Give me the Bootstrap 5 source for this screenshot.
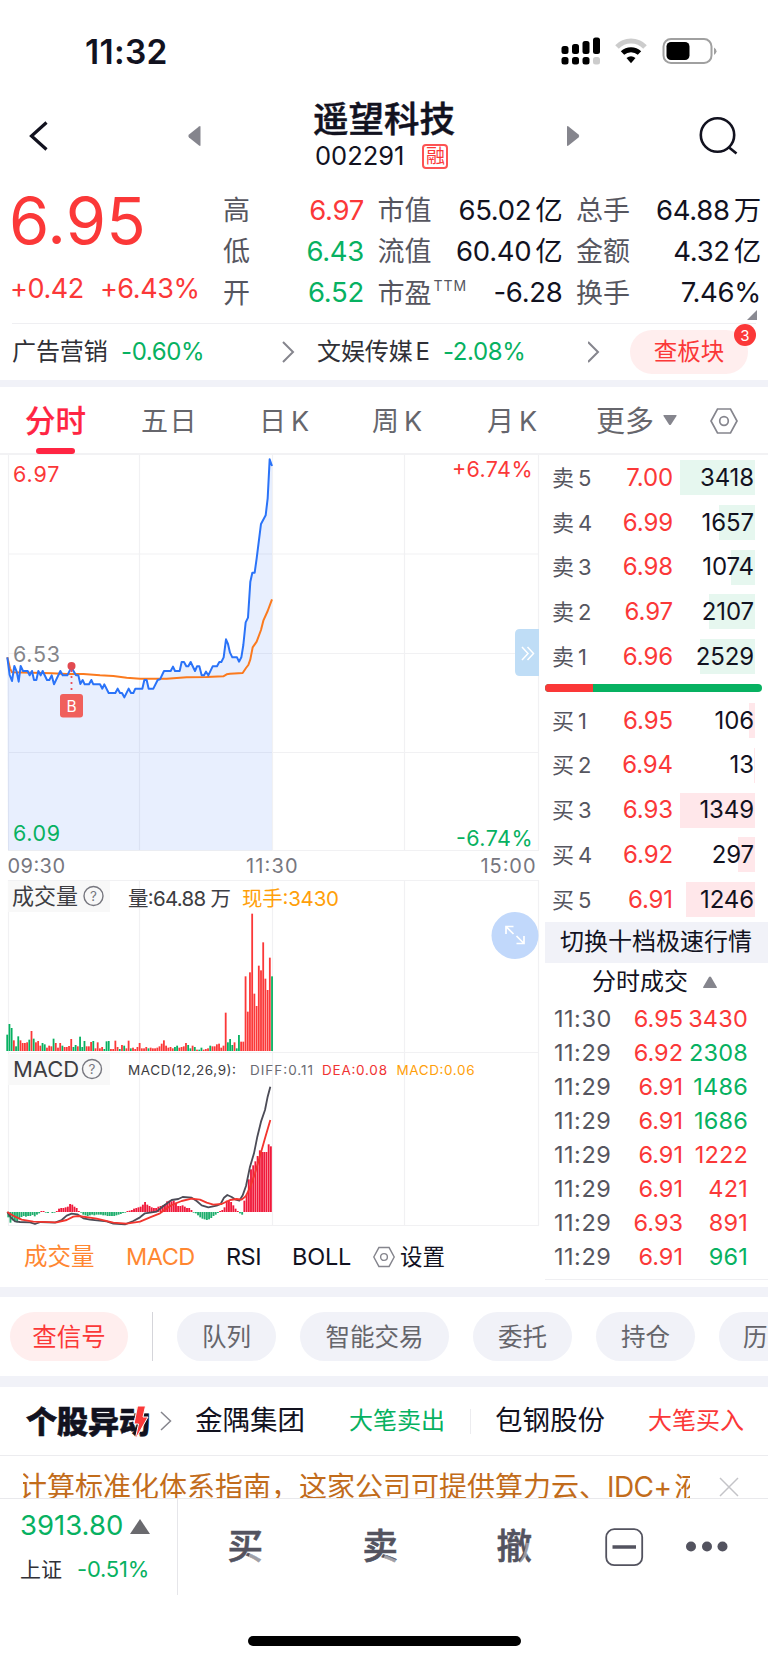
<!DOCTYPE html>
<html lang="zh-CN">
<head>
<meta charset="utf-8">
<meta name="viewport" content="width=device-width, initial-scale=1">
<title>遥望科技 002291</title>
<link rel="stylesheet" href="https://cdn.jsdelivr.net/npm/bootstrap@5.3.0/dist/css/bootstrap.min.css">
<style>
  :root { --up:#fb3838; --down:#07b161; --ink:#12121f; --mute:#56565f; --band:#f1f2f8; --rule:#f2f2f4; }
  body { width:768px; height:1663px; overflow:hidden; background:#fff; color:var(--ink); line-height:1;
         font-family:Inter,"Noto Sans CJK SC",sans-serif; font-size:24px; white-space:nowrap; }
  svg { display:block; flex:none; }
  .up { color:var(--up); } .down { color:var(--down); } .mute { color:var(--mute); } .ink2 { color:#303036; }
  .band { background:var(--band); }
  .status { height:96px; padding-left:85px; }
  .clock { font-size:33.5px; font-weight:600; width:475px; letter-spacing:.3px; padding-top:10px; }
  .titlebar { height:94px; }
  .stock-name { font-size:35.5px; font-weight:500; height:42px; -webkit-text-stroke:.5px var(--ink); }
  .code-row { height:30px; padding-left:2px; }
  .code { font-size:25.5px; letter-spacing:0; }
  .rong { width:26px; height:25px; border:2px solid #fd5353; border-radius:4px; font-size:19px; color:var(--up); margin-left:18px; }
  .quote { height:133px; }
  .last { font-size:65px; height:86px; margin-left:9px; letter-spacing:.2px; }
  .chg { font-size:27px; margin-left:10px; gap:16px; letter-spacing:-.4px; height:30px; }
  .stats { font-size:27px; }
  .stats .line { height:41.3px; }
  .stats .num { font-size:27.5px; letter-spacing:-.3px; }
  .ttm { font-size:14px; letter-spacing:1px; position:relative; top:-12px; margin-left:2px; }
  .sector { height:57px; border-top:1px solid #efeff2; margin-left:12px; margin-right:12px; }
  .sector .name { letter-spacing:-.1px; }
  .pill-red { background:#ffeeee; color:var(--up); border-radius:30px; }
  .dot3 { position:absolute; width:22px; height:22px; border-radius:50%; background:var(--up); color:#fff; font-size:15px; right:-8px; top:-6px; }
  .tabs { height:68px; font-size:27px; color:#66666c; border-bottom:2px solid var(--rule); padding-top:2px; }
  .tabs .on { font-size:30.5px; font-weight:500; color:#ff2543; position:relative; -webkit-text-stroke:.2px #ff2543; }
  .tabs .on i { position:absolute; left:11px; top:42px; width:39px; height:6px; border-radius:3px; background:#ff2543; }
  .board { height:832px; }
  .side { width:223px; }
  .lv { height:44.7px; padding-left:7px; padding-right:13px; }
  .lv .lab { width:56px; font-size:22px; color:var(--mute); letter-spacing:0; }
  .lv .lab span { font-size:22px; margin-right:4px; }
  .lv .pr { width:65px; text-align:right; letter-spacing:-.1px; }
  .lv .qt { width:75px; height:35px; margin-left:7px; position:relative; letter-spacing:-.1px; padding-right:1px; }
  .lv .qt i { position:absolute; right:0; top:0; bottom:0; }
  .lv .qt b { font-weight:400; position:relative; }
  .ratio { height:8.5px; width:217px; border-radius:5px; background:var(--down); overflow:hidden; margin:5px 0 6px; }
  .deal { height:34.1px; font-size:23.5px; padding-left:9px; }
  .deal .tm { width:61px; color:var(--mute); letter-spacing:.5px; }
  .deal .pr { width:68px; text-align:right; }
  .deal .qt { width:65px; text-align:right; letter-spacing:.2px; }
  .ind { height:60px; font-size:23.5px; padding-left:24px; }
  .quick { height:79px; padding-left:10px; overflow:hidden; }
  .quick .pill { height:49px; border-radius:25px; background:var(--band); color:#66666c; font-size:24.5px; flex:none; padding-top:1px; }
  .quick .pill.hot { background:#ffeeee; color:var(--up); }
  .news { height:69px; padding-left:26px; border-bottom:1px solid #ececef; }
  .logo { font-weight:900; font-size:31px; position:relative; width:125px; -webkit-text-stroke:.6px var(--ink); }
  .logo svg { position:absolute; left:107px; top:-1px; }
  .ticker { height:43px; color:#c26c1b; font-size:28px; border-bottom:1px solid #e9e9ec; overflow:hidden; }
  .ticker .run { margin-left:23px; width:667px; overflow:hidden; height:42px; line-height:62px; }
  .foot { height:96px; }
  .idx { width:178px; border-right:1px solid #e6e6ea; padding-left:20px; }
  .act { font-size:35.5px; font-weight:500; color:#53535f; -webkit-text-stroke:.6px #53535f; }
  .act span { position:relative; display:block; }
  .act svg { position:absolute; left:0; top:0; }
  .homebar { width:273px; height:10px; border-radius:5px; background:#000; margin:41px 0 0 248px; }
</style>
</head>
<body>
<header class="status d-flex align-items-center">
  <div class="clock">11:32</div>
  <svg class="mt-1" width="160" height="34" viewBox="560 33 160 34">
    <g fill="#000"><rect x="561.5" y="46" width="7" height="8" rx="2.5"/><rect x="572" y="44" width="7" height="10" rx="2.5"/><rect x="582.5" y="41" width="7" height="13" rx="2.5"/><rect x="593" y="37.500" width="7" height="16.500" rx="2.5"/>
    <rect x="561.5" y="57" width="7" height="7.500" rx="2.500"/><rect x="572" y="57" width="7" height="7.500" rx="2.5"/><rect x="582.5" y="57" width="7" height="7.5" rx="2.5"/><rect x="593" y="57" width="7" height="7.500" rx="2.5" fill="#ccc"/></g>
    <g fill="none"><path d="M617 47a19.500 19.500 0 0 1 28 0" stroke="#ccc" stroke-width="5"/><path d="M622.500 53a12.500 12.500 0 0 1 17 0" stroke="#000" stroke-width="5"/></g>
    <path d="M626.500 58q4.500-3.500 9 0l-4.500 5.200z" fill="#000"/>
    <rect x="663.500" y="39" width="48" height="24" rx="7.500" fill="none" stroke="#a0a0a0" stroke-width="2"/><rect x="666.500" y="42" width="23" height="18" rx="4.500"/><path d="M714 47.500q2.500 1.500 2.500 3.800t-2.500 3.800z" fill="#a0a0a0"/>
  </svg>
</header>

<div class="titlebar d-flex">
  <svg width="313" height="94" viewBox="0 96 313 94"><path d="M46.500 122.500L31.500 136L46.500 149.500" fill="none" stroke="#12121f" stroke-width="3.200"/><path d="M200.500 127v18q0 1.500-1.500 .5l-10-8q-1.500-1.500 0-3l10-8q1.500-1 1.500 .5z" fill="#85858d"/></svg>
  <div style="width:142px">
    <div class="stock-name d-flex align-items-center justify-content-center" style="margin-top:3px">遥望科技</div>
    <div class="code-row d-flex align-items-center">
      <span class="code">002291</span><span class="rong d-flex align-items-center justify-content-center">融</span></div>
  </div>
  <svg width="313" height="94" viewBox="455 96 313 94"><path d="M567 127v18q0 1.500 1.500 .5l10-8q1.500-1.500 0-3l-10-8q-1.500-1-1.500 .5z" fill="#85858d"/><g fill="none" stroke="#12121f" stroke-width="2.600"><circle cx="717.500" cy="135" r="16.700"/><path d="M728.500 147l8 6.500"/></g></svg>
</div>

<section class="quote d-flex">
  <div style="width:223px">
    <div class="last up d-flex align-items-center" style="margin-top:-12.5px">6.95</div>
    <div class="chg up d-flex align-items-center" style="margin-top:9.5px"><span>+0.42</span><span>+6.43%</span></div>
  </div>
  <div class="stats d-flex">
    <div style="width:141px">
      <div class="line d-flex align-items-center justify-content-between"><span class="mute">高</span><span class="num up">6.97</span></div>
      <div class="line d-flex align-items-center justify-content-between"><span class="mute">低</span><span class="num down">6.43</span></div>
      <div class="line d-flex align-items-center justify-content-between"><span class="mute">开</span><span class="num down">6.52</span></div>
    </div>
    <div style="width:185px;margin-left:13.5px">
      <div class="line d-flex align-items-center justify-content-between"><span class="mute">市值</span><span class="num">65.02<span style="margin-left:4px">亿</span></span></div>
      <div class="line d-flex align-items-center justify-content-between"><span class="mute">流值</span><span class="num">60.40<span style="margin-left:4px">亿</span></span></div>
      <div class="line d-flex align-items-center justify-content-between"><span class="mute">市盈<span class="ttm">TTM</span></span><span class="num">-6.28</span></div>
    </div>
    <div style="width:185px;margin-left:13.5px">
      <div class="line d-flex align-items-center justify-content-between"><span class="mute">总手</span><span class="num">64.88<span style="margin-left:4px">万</span></span></div>
      <div class="line d-flex align-items-center justify-content-between"><span class="mute">金额</span><span class="num">4.32<span style="margin-left:4px">亿</span></span></div>
      <div class="line d-flex align-items-center justify-content-between"><span class="mute">换手</span><span class="num">7.46%</span></div>
      <svg class="ms-auto" style="margin:-4px 4px 0 0" width="10" height="10"><path d="M10 0v10H0z" fill="#8a8a92"/></svg>
    </div>
  </div>
</section>

<section class="sector d-flex align-items-center">
  <div class="name ink2" style="width:109px">广告营销</div><div class="down" style="width:161px;letter-spacing:-.4px">-0.60%</div>
  <svg width="35" height="24" viewBox="0 0 35 24"><path d="M1 2l10 10L1 22" fill="none" stroke="#85858d" stroke-width="2"/></svg>
  <div class="name ink2" style="width:126px">文娱传媒<span style="margin-left:3px">E</span></div><div class="down" style="width:145px;letter-spacing:-.4px">-2.08%</div>
  <svg width="42" height="24" viewBox="0 0 42 24"><path d="M0 2l10 10L0 22" fill="none" stroke="#85858d" stroke-width="2"/></svg>
  <div class="pill-red position-relative d-flex align-items-center justify-content-center" style="width:118px;height:44px;flex:none;font-size:23.5px">查板块<span class="dot3 d-flex align-items-center justify-content-center">3</span></div>
</section>
<div class="band" style="height:7px"></div>

<nav class="tabs d-flex align-items-center">
  <div class="on" style="margin-left:25px;width:116px">分时<i></i></div>
  <div style="width:118px;letter-spacing:1.5px">五日</div>
  <div style="width:113px">日<span style="margin-left:5px">K</span></div>
  <div style="width:115px">周<span style="margin-left:5px">K</span></div>
  <div style="width:109px">月<span style="margin-left:5px">K</span></div>
  <div style="width:67px;font-size:29px">更多</div>
  <svg width="47" height="14" viewBox="0 0 47 14"><path d="M1 1h12q1 0 .5 1L8 10.500q-1 1-2 0L.5 2Q0 1 1 1z" fill="#85858d"/></svg>
  <svg width="28" height="28" viewBox="0 0 28 28"><g fill="none" stroke="#85858d" stroke-width="1.700"><path d="M7.500 2h13l6.500 12-6.500 12h-13L1 14z"/><circle cx="14" cy="14" r="4.300"/></g></svg>
</nav>

<main class="board d-flex">
  <div style="width:545px">
    <svg id="chart" width="545" height="772" viewBox="0 455 545 772" font-family="Inter,'Noto Sans CJK SC',sans-serif">
      <g stroke="#f1f1f3" stroke-width="1.200">
        <path d="M8.500 455V850M139.500 455V850M272.500 455V850M404.500 455V850M538.500 455V850M8 554H539M8 653.500H539M8 752.500H539M8 850.500H539"/>
        <path d="M8 880.500H539M8.500 880V1225M139.500 880V1225M272.500 880V1225M404.500 880V1225M538.500 880V1225M8 1052.500H539M8 1225.500H539"/>
      </g>
      <text x="13" y="661.500" font-size="21.500" fill="#858589" textLength="47">6.53</text>
      <g id="price" transform="translate(0 390) scale(.33333)" fill="none" stroke-linejoin="round"></g>
      <g font-size="21.500">
        <text x="13" y="482" fill="#fb3838" textLength="46.500">6.97</text>
        <text x="13" y="840.500" fill="#07b161" textLength="47">6.09</text>
        <text x="452" y="476.500" fill="#fb3838" textLength="80.500">+6.74%</text>
        <text x="456" y="846" fill="#07b161" textLength="76.500">-6.74%</text>
      </g>
      <path d="M71.500 670V692" stroke="#e8505b" stroke-width="1.800" stroke-dasharray="2 4"/>
      <circle cx="71.500" cy="666" r="4" fill="#e24a50"/>
      <rect x="60" y="694" width="23" height="23.500" rx="3" fill="#f0605c"/>
      <text x="71.500" y="711.500" font-size="15.500" fill="#fff" text-anchor="middle">B</text>
      <path d="M539 629h-19q-5 0-5 5v37q0 5 5 5h19z" fill="#bfddf6"/>
      <path d="M522 647l6 6.500-6 6.500M527.500 647l6 6.500-6 6.500" fill="none" stroke="#fff" stroke-width="1.500"/>
      <g font-size="20" fill="#77777f">
        <text x="7.500" y="873" textLength="57.500">09:30</text><text x="246" y="873" textLength="51.500">11:30</text><text x="480.500" y="873" textLength="55">15:00</text>
      </g>
      <path d="M8 881h102v31H8zM8 1054h102v31H8z" fill="#f8f8f8"/>
      <g fill="#3d3d42">
        <text x="12" y="903.500" font-size="22">成交量</text>
        <text x="13" y="1077" font-size="22">MACD</text>
        <text x="128" y="905.500" font-size="20.500" textLength="103">量:64.88 万</text>
        <text x="128" y="1074.500" font-size="13.500" textLength="108">MACD(12,26,9):</text>
      </g>
      <g fill="none" stroke="#77777f" stroke-width="1.400"><circle cx="93.500" cy="896" r="9.500"/><circle cx="92" cy="1069" r="9.500"/></g>
      <g fill="#77777f" font-size="13.500" text-anchor="middle"><text x="93.500" y="901">?</text><text x="92" y="1074">?</text></g>
      <text x="242" y="905.500" font-size="20.500" fill="#ff9f0a" textLength="97">现手:3430</text>
      <g font-size="13.500">
        <text x="250" y="1074.500" fill="#6b6b73" textLength="63">DIFF:0.11</text>
        <text x="322" y="1074.500" fill="#f03333" textLength="65">DEA:0.08</text>
        <text x="396.500" y="1074.500" fill="#ff9f0a" textLength="78">MACD:0.06</text>
      </g>
      <circle cx="515" cy="935.500" r="23.500" fill="#c1d8fb"/>
      <path d="M506 934v-7.500h7.500M506.500 927l7 7M524 936v7.500h-7.500M523.500 943l-7-7" fill="none" stroke="#fff" stroke-width="1.700"/>
      <g id="vol" transform="translate(0 840) scale(.33333)"></g>
      <g id="macd" transform="translate(0 1050) scale(.33333)"></g>
    </svg>
    <div class="ind d-flex align-items-center">
      <span style="color:#ff8732;width:102px">成交量</span><span style="color:#ff8732;width:100px;letter-spacing:-.5px">MACD</span><span style="width:66px;letter-spacing:-.5px">RSI</span><span style="width:81px;letter-spacing:-.2px">BOLL</span>
      <svg width="22" height="22" viewBox="0 0 28 28"><g fill="none" stroke="#85858d" stroke-width="1.800"><path d="M7.500 2h13l6.500 12-6.500 12h-13L1 14z"/><circle cx="14" cy="14" r="4.300"/></g></svg>
      <span style="margin-left:5px;font-size:22.500px">设置</span>
    </div>
  </div>
  <aside class="side">
    <div id="asks" style="padding-top:.5px"></div>
    <div class="ratio"><div style="width:48px;height:9px;background:#fb3838"></div></div>
    <div id="bids"></div>
    <div class="band d-flex align-items-center" style="height:41px;padding-left:15px">切换十档极速行情</div>
    <div class="d-flex align-items-center" style="height:39px;padding-left:47px">分时成交<svg style="margin-left:15px" width="14" height="12"><path d="M1 12h12q1.500 0 .5-1.500L8 1Q7 0 6 1L.5 10.500Q-.5 12 1 12z" fill="#85858d"/></svg></div>
    <div id="deals" style="margin-top:-.5px"></div>
    <div style="height:1px;background:#efeff2;margin-top:5px"></div>
  </aside>
</main>
<div class="band" style="height:10px"></div>

<section class="quick d-flex align-items-center">
  <div class="pill hot d-flex align-items-center justify-content-center" style="width:118px">查信号</div>
  <div style="width:1px;height:49px;background:#d5d5da;margin:0 24px;flex:none"></div>
  <div class="pill d-flex align-items-center justify-content-center" style="width:99px;margin-right:24px">队列</div>
  <div class="pill d-flex align-items-center justify-content-center" style="width:149px;margin-right:24px">智能交易</div>
  <div class="pill d-flex align-items-center justify-content-center" style="width:99px;margin-right:24px">委托</div>
  <div class="pill d-flex align-items-center justify-content-center" style="width:99px;margin-right:24px">持仓</div>
  <div class="pill d-flex align-items-center" style="width:99px;padding-left:24px">历史</div>
</section>
<div class="band" style="height:11px"></div>

<section class="news d-flex align-items-center">
  <div class="logo">个股异动<svg width="16" height="36" viewBox="0 0 16 36"><path d="M4.500 1h8L10 12h5L2 35l3.500-16H1z" fill="#fb3838" stroke="#fff" stroke-width="1"/></svg></div>
  <svg style="margin-left:9px" width="35" height="22" viewBox="0 0 35 22"><path d="M1 2l9.500 9L1 20" fill="none" stroke="#85858d" stroke-width="1.500"/></svg>
  <div style="width:154px;font-size:27.5px">金隅集团</div>
  <div class="down" style="width:121px;font-size:24px">大笔卖出</div>
  <div style="width:1px;height:25px;background:#ececef;margin-right:24px"></div>
  <div style="width:153px;font-size:27.500px">包钢股份</div>
  <div class="up" style="font-size:24px">大笔买入</div>
</section>
<div class="ticker d-flex">
  <div class="run"><span style="margin-left:-4px">计算标准化体系指南，这家公司可提供算力云、<span style="letter-spacing:-.6px">IDC+</span></span><span style="margin-left:3px">液冷</span></div>
  <svg style="margin:21px 0 0 29px" width="20" height="20"><path d="M1 1l18 18M19 1L1 19" stroke="#c4c4c8" stroke-width="1.500"/></svg>
</div>

<footer class="foot d-flex">
  <div class="idx">
    <div class="d-flex align-items-center down" style="font-size:27.500px;height:54px">3913.80<svg style="margin-left:7px" width="20" height="15"><path d="M0 15L10 0l10 15z" fill="#6a6a6e"/></svg></div>
    <div class="d-flex align-items-center" style="height:32px"><span class="ink2" style="font-size:21px;width:57px">上证</span><span class="down" style="font-size:22px;letter-spacing:-.2px">-0.51%</span></div>
  </div>
  <div class="act d-flex align-items-center" style="margin-left:49.5px;width:135px"><span>买<svg width="36" height="36"><path d="M22 24l14 7v6l-16-8z" fill="#fff" opacity=".45"/></svg></span></div>
  <div class="act d-flex align-items-center" style="width:134px"><span>卖<svg width="36" height="36"><path d="M22 26l14 6v5l-16-7z" fill="#fff" opacity=".45"/></svg></span></div>
  <div class="act d-flex align-items-center" style="width:108.5px"><span>撤<svg width="36" height="36"><path d="M31 14q-1 12-8 21" fill="none" stroke="#fff" stroke-width="3.500" opacity=".4"/></svg></span></div>
  <svg width="120" height="96" viewBox="605 1498 120 96"><rect x="606.200" y="1528.200" width="36" height="36" rx="8" fill="none" stroke="#53535f" stroke-width="1.800"/><path d="M612.500 1546h23.500" stroke="#53535f" stroke-width="3.500"/></svg>
  <svg style="margin-left:-40px" width="50" height="96" viewBox="685 1498 50 96"><g fill="#53535f"><circle cx="691" cy="1545.500" r="5"/><circle cx="707" cy="1545.500" r="5"/><circle cx="722.500" cy="1545.500" r="5"/></g></svg>
</footer>
<div class="homebar"></div>

<script src="https://cdn.jsdelivr.net/npm/bootstrap@5.3.0/dist/js/bootstrap.bundle.min.js"></script>
<script>
const UP = '#fb3838', DOWN = '#07b161';
const el = id => document.getElementById(id);

// order book: [label, price, volume, bar width]
const level = (side, tint) => ([n, p, q, w]) =>
  `<div class="lv d-flex align-items-center"><div class="lab"><span>${side}</span>${n}</div><div class="pr up">${p}</div>
   <div class="qt d-flex align-items-center justify-content-end"><i style="width:${w}px;background:${tint}"></i><b>${q}</b></div></div>`;
el('asks').innerHTML = [[5,'7.00',3418,75],[4,'6.99',1657,36],[3,'6.98',1074,24],[2,'6.97',2107,46],[1,'6.96',2529,55]].map(level('卖', '#e6f7ef')).join('');
el('bids').innerHTML = [[1,'6.95',106,6],[2,'6.94',13,1],[3,'6.93',1349,75],[4,'6.92',297,17],[5,'6.91',1246,69]].map(level('买', '#ffe7ea')).join('');
el('deals').innerHTML = [['11:30','6.95',3430,1],['11:29','6.92',2308,0],['11:29','6.91',1486,0],['11:29','6.91',1686,0],['11:29','6.91',1222,1],['11:29','6.91',421,1],['11:29','6.93',891,1],['11:29','6.91',961,0]]
  .map(([t, p, q, u]) => `<div class="deal d-flex align-items-center"><div class="tm">${t}</div><div class="pr up">${p}</div><div class="qt ${u ? 'up' : 'down'}">${q}</div></div>`).join('');

// intraday price and average
const price = '22,802 29,855 36,873 43,828 50,845 56,875 62,828 69,843 83,843 89,856 96,843 102,870 109,870 115,843 122,856 128,843 141,870 148,870 155,856 162,883 181,843 188,856 202,856 214,832 228,856 235,856 241,882 248,870 254,883 267,883 274,870 280,883 300,883 307,896 313,883 326,909 346,909 353,896 360,909 366,909 373,922 386,896 393,909 400,909 406,896 427,896 433,870 440,870 446,896 460,896 473,870 480,868 492,843 512,843 519,830 525,843 539,843 545,816 552,816 559,829 565,829 572,816 585,843 591,829 598,829 605,856 612,856 618,845 625,856 638,829 651,829 658,816 664,816 671,802 678,748 684,762 690,788 697,802 711,802 717,815 724,802 730,765 737,697 744,683 751,575 757,548 764,548 770,505 783,402 797,376 803,325 809,208 816,228';
const avg = '22,802 30,835 36,847 100,848 155,850 200,852 250,852 300,856 340,858 380,863 420,866 500,866 560,862 620,861 670,859 680,853 690,851 728,849 738,834 745,825 751,808 758,772 770,755 783,720 790,692 803,663 816,628';
el('price').innerHTML = `<polygon points="${price} 816,1381 24,1381" fill="#2c70f5" fill-opacity=".11"/><polyline points="${avg}" stroke="#fb7a1e" stroke-width="6"/><polyline points="${price}" stroke="#2a73f8" stroke-width="6"/>`;

// volume, one bar a minute; g = falling
const vol = '49g 81g 69g 32 14g 44g 32 24 24 26 34g 60 37g 26 30 16 24g 20g 10 16 14 37g 24 10 24 16g 12 12 15 36 12g 18g 14 43g 12g 30g 14 14 27 30g 8 26 8 12 6g 29g 30g 6 6 31 12 6g 18 16g 8 31 8g 10 6 12 24 8 8 12 8g 10 8 8 10 14 22 32 16 10 12 8 12g 16g 10 12 14 24 18g 8g 16 12g 4 4g 10g 4 6 8 16g 14 14 20 22 10 16 115 26g 36g 18g 26 8g 48g 28 28 224 118 236 412 172 135 256 242 326 217 183 280 224g'.split(' ');
el('vol').innerHTML = vol.map((v, i) => { const h = parseInt(v); return `<rect x="${(19 + 6.62 * i).toFixed(1)}" y="${633 - h}" width="5.400" height="${h}" fill="${v.endsWith('g') ? DOWN : UP}"/>`; }).join('');

// MACD histogram, DIFF and DEA
const hist = [-16,-32,-25,-28,-31,-22,-15,-12,-14,-12,-12,-9,-13,-8,-4,3,3,-2,-3,0,-3,-2,3,10,12,12,14,16,24,22,16,12,3,-2,-8,-10,-12,-10,-8,-10,-8,-8,-8,-10,-10,-12,-12,-12,-12,-10,-8,-6,-3,-2,3,4,6,10,12,14,16,22,30,22,18,14,12,12,16,18,20,24,32,34,32,34,28,18,18,20,16,12,12,6,-2,-4,-10,-16,-20,-22,-24,-22,-18,-12,-8,-3,3,6,14,34,36,30,20,10,3,-4,-8,34,52,98,128,140,152,168,185,180,180,180,203,197];
const diff = '22,486 32,502 45,514 60,516 90,517 105,522 122,516 165,518 185,510 200,497 215,491 232,493 250,505 270,509 320,514 340,521 375,523 400,513 420,502 435,490 470,485 490,468 515,450 535,447 548,441 575,443 590,453 605,466 625,472 650,467 662,462 672,443 682,435 695,441 705,448 718,452 728,436 738,408 750,350 762,310 772,260 783,215 795,180 803,140 811,110';
const dea = '22,486 45,500 65,509 100,515 170,517 200,510 220,500 235,498 290,506 340,518 380,521 420,515 450,502 480,490 515,465 545,453 575,446 600,449 620,458 640,464 665,462 690,450 710,447 725,449 738,438 750,412 765,370 780,318 795,265 811,210';
el('macd').innerHTML = hist.map((h, i) => `<rect x="${(22 + 6.62 * i).toFixed(1)}" y="${h > 0 ? 486 - h : 486}" width="5.600" height="${Math.abs(h)}" fill="${h > 0 ? '#f0193a' : '#1fae6d'}"/>`).join('')
  + `<g fill="none" stroke-width="5.500" stroke-linejoin="round"><polyline points="${diff}" stroke="#4c4c57"/><polyline points="${dea}" stroke="#f2352e"/></g>`;
</script>
</body>
</html>
